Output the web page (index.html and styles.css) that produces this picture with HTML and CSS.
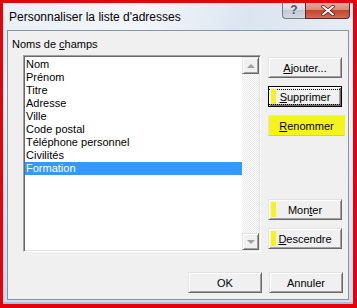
FILE: index.html
```html
<!DOCTYPE html>
<html lang="fr">
  <head>
    <meta charset="UTF-8" />
    <title>Personnaliser la liste d'adresses</title>
    <link rel="stylesheet" href="styles.css">
  </head>
  <body>
    <div class="window">
      <div class="titlebar">
        <span class="title">Personnaliser la liste d'adresses</span>
        <div class="caption-buttons">
          <div class="cap-help">?</div>
          <div class="cap-close">
            <svg width="14" height="11" viewBox="0 0 14 11">
              <path d="M2 1.5 L12 9.5 M12 1.5 L2 9.5" stroke="#4a1010" stroke-width="3.4" stroke-linecap="round" />
              <path d="M2 1.5 L12 9.5 M12 1.5 L2 9.5" stroke="#fff" stroke-width="2" stroke-linecap="round" />
            </svg>
          </div>
        </div>
      </div>

      <div class="client">
        <div class="label">Noms de <u>c</u>hamps</div>
        <div class="main">
          <div class="listbox">
            <div class="items">
              <div class="item">Nom</div>
              <div class="item">Prénom</div>
              <div class="item">Titre</div>
              <div class="item">Adresse</div>
              <div class="item">Ville</div>
              <div class="item">Code postal</div>
              <div class="item">Téléphone personnel</div>
              <div class="item">Civilités</div>
              <div class="item selected">Formation</div>
            </div>
            <div class="scrollbar">
              <div class="arrow"><span class="tri-up"></span></div>
              <div class="track"></div>
              <div class="arrow"><span class="tri-down"></span></div>
            </div>
          </div>
          <div class="buttons">
            <div class="btn"><u>A</u>jouter...</div>
            <div class="btn default"><span class="focus"><u>S</u>upprimer</span><span class="mark"></span></div>
            <div class="btn marked"><u>R</u>enommer</div>
            <div class="spacer"></div>
            <div class="btn">Mon<u>t</u>er<span class="mark"></span></div>
            <div class="btn"><u>D</u>escendre<span class="mark"></span></div>
          </div>
        </div>
        <div class="footer">
          <div class="btn">OK</div>
          <div class="btn">Annuler</div>
        </div>
      </div>
    </div>
  </body>
</html>
```

FILE: styles.css
```css
body {
  margin: 0;
  background: #e8000b;
  font-family: "Liberation Sans", Arial, sans-serif;
  font-size: 11px;
  color: #000;
}

.window {
  margin: 3px;
  width: 350px;
  height: 301px;
  display: flex;
  flex-direction: column;
  background: linear-gradient(180deg, #dfe8f2 0%, #eef3f8 30%, #cfdcea 100%);
  border-bottom: 2px solid #9fc3e2;
  box-sizing: border-box;
}

.titlebar {
  height: 27px;
  display: flex;
  justify-content: space-between;
  align-items: flex-start;
  background: linear-gradient(100deg, #e9eff6 0%, #f3f6fa 40%, #dbe5f0 70%, #e6edf5 100%);
}

.title {
  font-size: 12px;
  margin: 7px 0 0 6px;
}

.caption-buttons {
  display: flex;
  margin-right: 3px;
}

.cap-help {
  width: 22px;
  height: 15px;
  border: 1px solid #6f7d8c;
  border-right: none;
  border-top: none;
  border-radius: 0 0 0 4px;
  background: linear-gradient(180deg, #e7ebf0 0%, #d6dce3 45%, #c1c9d3 50%, #d3d9e1 100%);
  color: #4c5563;
  font-size: 12px;
  font-weight: bold;
  text-align: center;
  line-height: 15px;
}

.cap-close {
  width: 43px;
  height: 15px;
  border: 1px solid #5b2a2a;
  border-top: none;
  border-radius: 0 0 4px 0;
  background: linear-gradient(180deg, #e6a897 0%, #d98a78 45%, #c5452f 50%, #cf6b55 100%);
  display: flex;
  justify-content: center;
  align-items: center;
}

.client {
  flex: 1;
  margin: 0 4px 2px 4px;
  border: 1px solid #8596a8;
  background: #f0f0f0;
  display: flex;
  flex-direction: column;
}

.label {
  line-height: 13px;
  padding: 7px 0 0 4px;
}

.main {
  display: flex;
  gap: 7px;
  margin: 4px 0 0 15px;
}

.listbox {
  width: 238px;
  height: 197px;
  box-sizing: border-box;
  display: flex;
  background: #fff;
  border-top: 1px solid #a0a0a0;
  border-left: 1px solid #a0a0a0;
  border-right: 1px solid #fff;
  border-bottom: 1px solid #fff;
  box-shadow: inset 1px 1px 0 #696969, inset -1px -1px 0 #e3e3e3;
  padding: 1px;
}

.items {
  flex: 1;
  padding-top: 1px;
}

.item {
  height: 13px;
  line-height: 13px;
  padding-left: 1px;
  white-space: nowrap;
}

.item.selected {
  background: #3399ff;
  color: #fff;
}

.scrollbar {
  width: 17px;
  display: flex;
  flex-direction: column;
}

.track {
  flex: 1;
  background: repeating-conic-gradient(#ffffff 0 25%, #e8e8e8 0 50%) 0 0 / 2px 2px;
}

.arrow {
  height: 17px;
  box-sizing: border-box;
  background: #f0f0f0;
  border-top: 1px solid #e3e3e3;
  border-left: 1px solid #e3e3e3;
  border-right: 1px solid #696969;
  border-bottom: 1px solid #696969;
  box-shadow: inset 1px 1px 0 #fff, inset -1px -1px 0 #a0a0a0;
  display: flex;
  justify-content: center;
  align-items: center;
}

.tri-up {
  border-left: 4px solid transparent;
  border-right: 4px solid transparent;
  border-bottom: 4px solid #a0a0a0;
}

.tri-down {
  border-left: 4px solid transparent;
  border-right: 4px solid transparent;
  border-top: 4px solid #a0a0a0;
}

.buttons {
  width: 74px;
  display: flex;
  flex-direction: column;
  gap: 8px;
  padding-top: 2px;
}

.spacer {
  height: 47px;
}

.btn {
  position: relative;
  height: 21px;
  box-sizing: border-box;
  background: #f0f0f0;
  border-top: 1px solid #e3e3e3;
  border-left: 1px solid #e3e3e3;
  border-right: 1px solid #696969;
  border-bottom: 1px solid #696969;
  box-shadow: inset 1px 1px 0 #fff, inset -1px -1px 0 #a0a0a0;
  display: flex;
  justify-content: center;
  align-items: center;
  white-space: nowrap;
}

.btn.default {
  border: 1px solid #000;
  box-shadow: inset 1px 1px 0 #fff, inset -1px -1px 0 #696969, inset -2px -2px 0 #a0a0a0;
}

.focus {
  outline: 1px dotted #000;
  padding: 1px 6px;
  width: 62px;
  text-align: center;
}

.btn.marked {
  background: #f4f41a;
  box-shadow: none;
  margin-right: -3px;
  border-right-color: #f4f41a;
  border-bottom-color: #c8c8a0;
}

.mark {
  position: absolute;
  left: 2px;
  top: 2px;
  width: 5px;
  height: 15px;
  background: #f4f41a;
}

.footer {
  display: flex;
  justify-content: flex-end;
  gap: 7px;
  margin: 20px 5px 0 0;
}

.footer .btn {
  width: 74px;
}
```
